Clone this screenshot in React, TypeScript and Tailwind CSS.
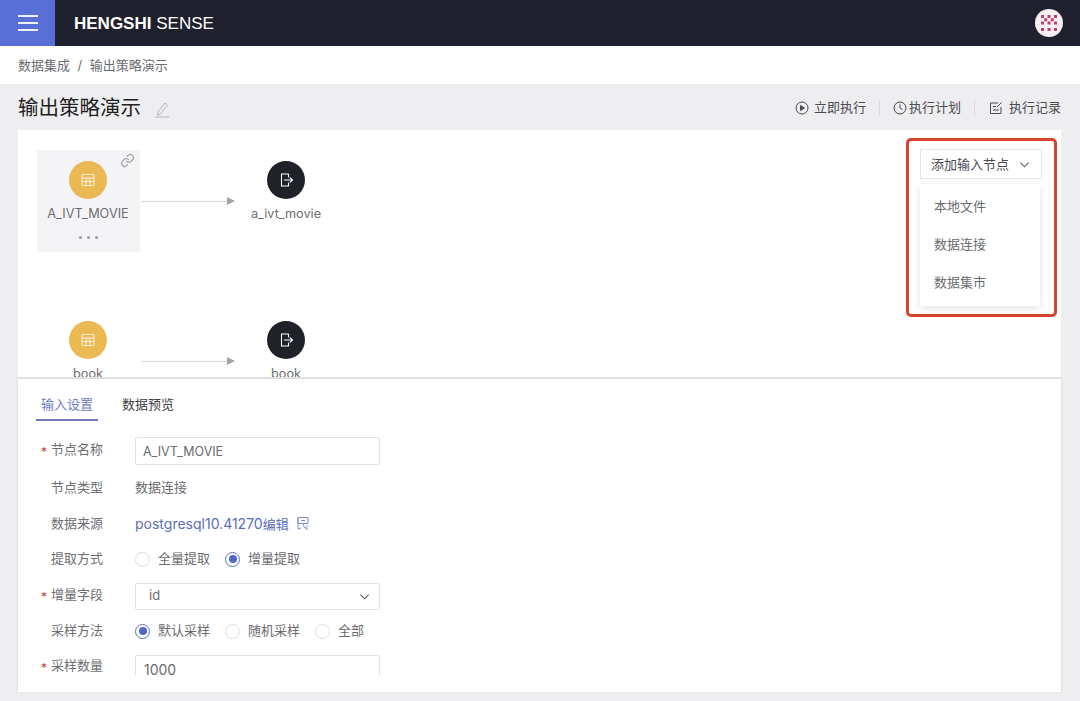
import React from 'react';

const font = { fontFamily: '"Inter", "Noto Sans CJK SC", sans-serif' };

function TableIcon() {
    return (
        <svg width="14" height="14" viewBox="0 0 14 14" fill="none" stroke="#fff" strokeOpacity="0.8" strokeWidth="1">
            <rect x="1" y="1.5" width="12" height="11" rx="1" />
            <path d="M1 5h12M1 8.5h12M5 5v7.5M9 5v7.5" />
        </svg>
    );
}

function OutputIcon() {
    return (
        <svg width="16" height="16" viewBox="0 0 16 16" fill="none" stroke="#fff" strokeWidth="1.1" strokeLinejoin="round" strokeLinecap="round">
            <path d="M10.5 5V2H3.5v12h7v-3" />
            <path d="M6.5 8h8M12.2 5.800 14.500 8l-2.300 2.200" />
        </svg>
    );
}

function Edge() {
    return (
        <div className="flex items-center self-start w-[94px] h-[8px] ml-[2px] mt-[47px] shrink-0">
            <div className="h-px flex-1 bg-[#dadade]" />
            <div className="w-0 h-0 border-y-[4px] border-y-transparent border-l-[8px] border-l-[#a3a3a3]" />
        </div>
    );
}

function FlowNode({ label, kind, active }: { label: string; kind: 'in' | 'out'; active?: boolean }) {
    return (
        <div className={`relative w-[102px] h-[102px] shrink-0 flex flex-col items-center pt-[11px] ${active ? 'bg-[#f4f4f6] shadow-[1px_0_0_#f4f4f6]' : ''}`}>
            <div className={`w-[38px] h-[38px] rounded-full flex items-center justify-center ${kind === 'in' ? 'bg-[#ebb954]' : 'bg-[#1f2329]'}`}>
                {kind === 'in' ? <TableIcon /> : <OutputIcon />}
            </div>
            <div className="text-[12.700px] leading-[16px] mt-[7px] text-[#6e6e73]">{label}</div>
            {active && (
                <>
                    <div className="flex gap-[5px] mt-[14px]">
                        <span className="w-[3px] h-[3px] rounded-full bg-[#9a9aa0]" />
                        <span className="w-[3px] h-[3px] rounded-full bg-[#9a9aa0]" />
                        <span className="w-[3px] h-[3px] rounded-full bg-[#9a9aa0]" />
                    </div>
                    <svg className="absolute top-[3px] right-[4px]" width="15" height="15" viewBox="0 0 24 24" fill="none" stroke="#a8a8ad" strokeWidth="2" strokeLinecap="round">
                        <path d="M10 13a5 5 0 0 0 7.500.5l3-3a5 5 0 0 0-7-7l-1.700 1.700" />
                        <path d="M14 11a5 5 0 0 0-7.500-.5l-3 3a5 5 0 0 0 7 7l1.700-1.700" />
                    </svg>
                </>
            )}
        </div>
    );
}

function Radio({ label, on }: { label: string; on?: boolean }) {
    return (
        <div className="flex items-center gap-[8px]">
            <span className={`w-[15px] h-[15px] rounded-full border flex items-center justify-center bg-white ${on ? 'border-[#5b6fc9]' : 'border-[#dedee2]'}`}>
                {on && <span className="w-[8px] h-[8px] rounded-full bg-[#5069c8]" />}
            </span>
            <span>{label}</span>
        </div>
    );
}

function FormRow({ label, required, rowClass, labelClass, children }: { label: string; required?: boolean; rowClass: string; labelClass?: string; children: React.ReactNode }) {
    return (
        <div className={`flex items-center ${rowClass}`}>
            <div className={`relative w-[117px] pl-[33px] shrink-0 text-[#6e6e73] ${labelClass ?? ''}`}>
                {required && <span className="absolute left-[23px] top-[3px] text-[#c8443a] text-[12px]">*</span>}
                {label}
            </div>
            {children}
        </div>
    );
}

export default function App() {
    return (
        <div className="relative w-[1080px] h-[701px] overflow-hidden bg-[#eeeef1] flex flex-col text-[13px]" style={font}>
            {/* Top bar */}
            <div className="h-[46px] bg-[#20212e] flex items-center shrink-0">
                <div className="w-[55px] h-full bg-[#5a6fd6] flex flex-col items-center justify-center gap-[5px]">
                    <span className="w-5 h-[2px] bg-white/90" />
                    <span className="w-5 h-[2px] bg-white/90" />
                    <span className="w-5 h-[2px] bg-white/90" />
                </div>
                <div className="ml-[19px] pt-[2px] text-[17px] text-white" style={{ fontFamily: '"Liberation Sans", sans-serif' }}>
                    <span className="font-bold">HENGSHI</span> <span>SENSE</span>
                </div>
                <div className="ml-auto mr-[17px] w-7 h-7 rounded-full bg-[#f6f0f2] flex items-center justify-center">
                    <svg width="18" height="18" viewBox="0 0 18 18" fill="#c2406e">
                        <path d="M1 1h3v3H1zM7.500 1h3v3h-3zM14 1h3v3h-3zM4.200 4.200h3v3h-3zM10.800 4.200h3v3h-3zM1 7.500h3v3H1zM7.500 7.500h3v3h-3zM14 7.500h3v3h-3zM1 14h3v3H1zM7.500 14h3v3h-3zM14 14h3v3h-3z" />
                    </svg>
                </div>
            </div>

            {/* Breadcrumb */}
            <div className="h-[38px] bg-white flex items-center pl-[18px] pt-[1px] text-[13px] text-[#6b6b70] shrink-0">
                <span>数据集成</span>
                <span className="mx-[7.500px]">/</span>
                <span>输出策略演示</span>
            </div>

            {/* Title row */}
            <div className="h-[46px] flex items-center pl-[18px] pr-[19px] pt-[2px] shrink-0">
                <h1 className="text-[20.500px] text-[#1f1f22]">输出策略演示</h1>
                <svg className="ml-[13px] mt-[2px]" width="16" height="18" viewBox="0 0 16 18" fill="none" stroke="#b4b4b8" strokeWidth="1">
                    <path d="M4 12 11 3l2.500 2L6.500 14l-3 1z" />
                    <path d="M1 17h14" />
                </svg>
                <div className="ml-auto flex items-center text-[13px] text-[#4a4a4f]">
                    <svg width="14" height="14" viewBox="0 0 14 14" fill="none" stroke="#4a4a4f" strokeWidth="1">
                        <circle cx="7" cy="7" r="6" />
                        <path d="M5.500 4.500v5l4-2.500z" fill="#4a4a4f" />
                    </svg>
                    <span className="ml-[5px]">立即执行</span>
                    <span className="w-px h-4 bg-[#dcdce0] mx-[13px]" />
                    <svg width="14" height="14" viewBox="0 0 14 14" fill="none" stroke="#4a4a4f" strokeWidth="1">
                        <circle cx="7" cy="7" r="6" />
                        <path d="M7 3.500V7l2.500 1.500" />
                    </svg>
                    <span className="ml-[2px]">执行计划</span>
                    <span className="w-px h-4 bg-[#dcdce0] ml-[13px] mr-[14px]" />
                    <svg width="14" height="14" viewBox="0 0 14 14" fill="none" stroke="#4a4a4f" strokeWidth="1">
                        <path d="M9 2H1.500v10.500h10.500V6" />
                        <path d="M4 5.500h3M4 9h6M8 6l4.500-4.500" />
                    </svg>
                    <span className="ml-[6px]">执行记录</span>
                </div>
            </div>

            {/* Canvas */}
            <div className="relative ml-[18px] mr-[19px] h-[247px] bg-white overflow-hidden shrink-0 pl-[19px] pt-[20px]">
                <div className="flex">
                    <FlowNode label="A_IVT_MOVIE" kind="in" active />
                    <Edge />
                    <FlowNode label="a_ivt_movie" kind="out" />
                </div>
                <div className="flex mt-[58px]">
                    <FlowNode label="book" kind="in" />
                    <Edge />
                    <FlowNode label="book" kind="out" />
                </div>

                {/* Add node menu */}
                <div className="absolute top-[19px] left-[902px] w-[122px]">
                    <div className="h-[30px] border border-[#e6e6ea] flex items-center pl-[10px] pt-[1px] text-[13px] text-[#4a4a4f] bg-white">
                        添加输入节点
                        <svg className="ml-[10px]" width="11" height="11" viewBox="0 0 12 12" fill="none" stroke="#55555a" strokeWidth="1.1">
                            <path d="M1.500 4 6 8.500 10.500 4" />
                        </svg>
                    </div>
                    <div className="mt-[5px] w-[120px] h-[122px] bg-white shadow-[0_2px_8px_rgba(0,0,0,0.12)] pt-[3.500px] pl-[14px] text-[13px] text-[#6b6b70]">
                        <div className="h-[38px] flex items-center">本地文件</div>
                        <div className="h-[38px] flex items-center">数据连接</div>
                        <div className="h-[38px] flex items-center">数据集市</div>
                    </div>
                </div>
                <div className="absolute top-[8px] left-[888px] w-[151px] h-[179px] border-[3px] border-[#d5442c] rounded-[5px]" />
            </div>

            {/* Detail panel */}
            <div className="ml-[18px] mr-[19px] mt-[2px] h-[313px] bg-white shadow-[0_-1px_3px_rgba(0,0,0,0.12)] overflow-hidden shrink-0 text-[13px] text-[#6b6b70]">
                <div className="flex items-start pl-[18px] h-[44px]">
                    <div className="w-[62px] h-[42px] border-b-2 border-[#6f7ab8] text-center leading-[51px] text-[#6d7cc4]">输入设置</div>
                    <div className="ml-[24px] leading-[51px] text-[#3c3c40]">数据预览</div>
                </div>
                <div className="h-[252px] overflow-hidden pt-[10px]">
                    <FormRow label="节点名称" required rowClass="h-[36px]" labelClass="mb-[3px]">
                        <div className="w-[245px] h-[28px] border border-[#e2e2e6] rounded-[2px] pl-[7px] pt-[2px] text-[12.500px] flex items-center">A_IVT_MOVIE</div>
                    </FormRow>
                    <FormRow label="节点类型" rowClass="h-[37px]">
                        <span>数据连接</span>
                    </FormRow>
                    <FormRow label="数据来源" rowClass="h-[35px]">
                        <span className="text-[#5b6fb8] text-[14px]">postgresql10.41270<span className="text-[13px]">编辑</span></span>
                        <svg className="ml-[7px]" width="14" height="15" viewBox="0 0 14 15" fill="none" stroke="#7e8cc6" strokeWidth="1">
                            <path d="M2 1.500h10v6H2zM2 1.500V13M5 4.500h4M2 13l3-1M7 7.500c0 3 2 5 5 6M12 9.500l-3 2.500" />
                        </svg>
                    </FormRow>
                    <FormRow label="提取方式" rowClass="h-[36px]">
                        <div className="flex gap-[15px]">
                            <Radio label="全量提取" />
                            <Radio label="增量提取" on />
                        </div>
                    </FormRow>
                    <FormRow label="增量字段" required rowClass="h-[38px]" labelClass="mb-[3px]">
                        <div className="w-[245px] h-[27px] border border-[#e2e2e6] rounded-[2px] pl-[13px] pr-[9px] flex items-center justify-between">
                            id
                            <svg width="11" height="11" viewBox="0 0 12 12" fill="none" stroke="#55555a" strokeWidth="1.1">
                                <path d="M1.500 4 6 8.500 10.500 4" />
                            </svg>
                        </div>
                    </FormRow>
                    <FormRow label="采样方法" rowClass="h-[32px]">
                        <div className="flex gap-[15px]">
                            <Radio label="默认采样" on />
                            <Radio label="随机采样" />
                            <Radio label="全部" />
                        </div>
                    </FormRow>
                    <FormRow label="采样数量" required rowClass="h-[44px]" labelClass="mb-[6px]">
                        <div className="w-[245px] h-[28px] border border-[#e2e2e6] rounded-[2px] pl-[8px] text-[14px] flex items-center">1000</div>
                    </FormRow>
                </div>
            </div>
        </div>
    );
}
